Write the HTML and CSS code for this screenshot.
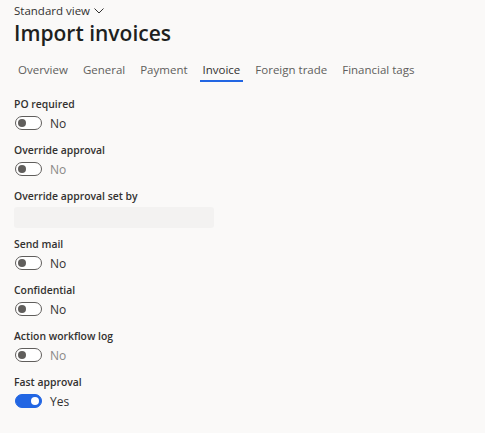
FILE: index.html
```html
<!DOCTYPE html>
<html lang="en">
<head>
  <meta charset="UTF-8" />
  <title>Import invoices</title>
  <link rel="stylesheet" href="styles.css">
</head>
<body>
  <div class="page">
    <div class="view-picker">Standard view
      <svg class="chevron" width="10" height="6" viewBox="0 0 10 6"><path d="M0.5 0.5 L5 5 L9.5 0.5" fill="none" stroke="#323130" stroke-width="1"/></svg>
    </div>
    <h1 class="title">Import invoices</h1>

    <nav class="tabs">
      <a>Overview</a>
      <a>General</a>
      <a>Payment</a>
      <a class="active">Invoice</a>
      <a>Foreign trade</a>
      <a>Financial tags</a>
    </nav>

    <div class="form">
      <div class="field">
        <label>PO required</label>
        <div class="toggle-row"><span class="toggle"></span><span class="value">No</span></div>
      </div>
      <div class="field">
        <label>Override approval</label>
        <div class="toggle-row disabled"><span class="toggle"></span><span class="value">No</span></div>
      </div>
      <div class="field">
        <label>Override approval set by</label>
        <div class="textbox"></div>
      </div>
      <div class="field">
        <label>Send mail</label>
        <div class="toggle-row"><span class="toggle"></span><span class="value">No</span></div>
      </div>
      <div class="field">
        <label>Confidential</label>
        <div class="toggle-row"><span class="toggle"></span><span class="value">No</span></div>
      </div>
      <div class="field">
        <label>Action workflow log</label>
        <div class="toggle-row disabled"><span class="toggle"></span><span class="value">No</span></div>
      </div>
      <div class="field">
        <label>Fast approval</label>
        <div class="toggle-row"><span class="toggle on"></span><span class="value">Yes</span></div>
      </div>
    </div>
  </div>
</body>
</html>
```

FILE: styles.css
```css
body {
  margin: 0;
  background-color: #faf9f8;
  color: #323130;
  font-family: "Open Sans", "Noto Sans", sans-serif;
}
.page {
  padding: 2px 14px;
}
.view-picker {
  font-size: 11.5px;
  line-height: 17px;
  display: flex;
  align-items: center;
  gap: 4px;
}
.title {
  margin: 0;
  font-size: 21px;
  font-weight: 600;
  line-height: 28px;
  color: #201f1e;
}
.tabs {
  display: flex;
  margin-top: 14px;
  gap: 15px;
  padding-left: 4px;
}
.tabs a {
  font-size: 11.5px;
  color: #605e5c;
  line-height: 17px;
  padding-bottom: 2px;
  border-bottom: 2px solid transparent;
}
.tabs a.active {
  color: #323130;
  border-bottom-color: #2266e3;
  padding-left: 3px;
  padding-right: 3px;
  margin: 0 -3px;
}
.form {
  margin-top: 15px;
  display: flex;
  flex-direction: column;
  gap: 9px;
}
.field label {
  display: block;
  font-size: 10.4px;
  font-weight: 600;
  line-height: 15px;
}
.toggle-row {
  display: flex;
  align-items: center;
  height: 22px;
  padding-left: 1px;
  gap: 8px;
}
.toggle {
  position: relative;
  width: 25px;
  height: 12px;
  border: 1px solid #605e5c;
  border-radius: 7px;
  background-color: #fff;
}
.toggle::after {
  content: "";
  position: absolute;
  top: 2px;
  left: 2px;
  width: 8px;
  height: 8px;
  border-radius: 50%;
  background-color: #605e5c;
}
.toggle.on {
  background-color: #2266e3;
  border-color: #2266e3;
}
.toggle.on::after {
  left: auto;
  right: 2px;
  background-color: #fff;
}
.value {
  font-size: 12px;
}
.toggle-row.disabled .value {
  color: #8a8886;
}
.textbox {
  margin-top: 3px;
  width: 200px;
  height: 21px;
  border-radius: 3px;
  background-color: #f3f2f1;
}
```
